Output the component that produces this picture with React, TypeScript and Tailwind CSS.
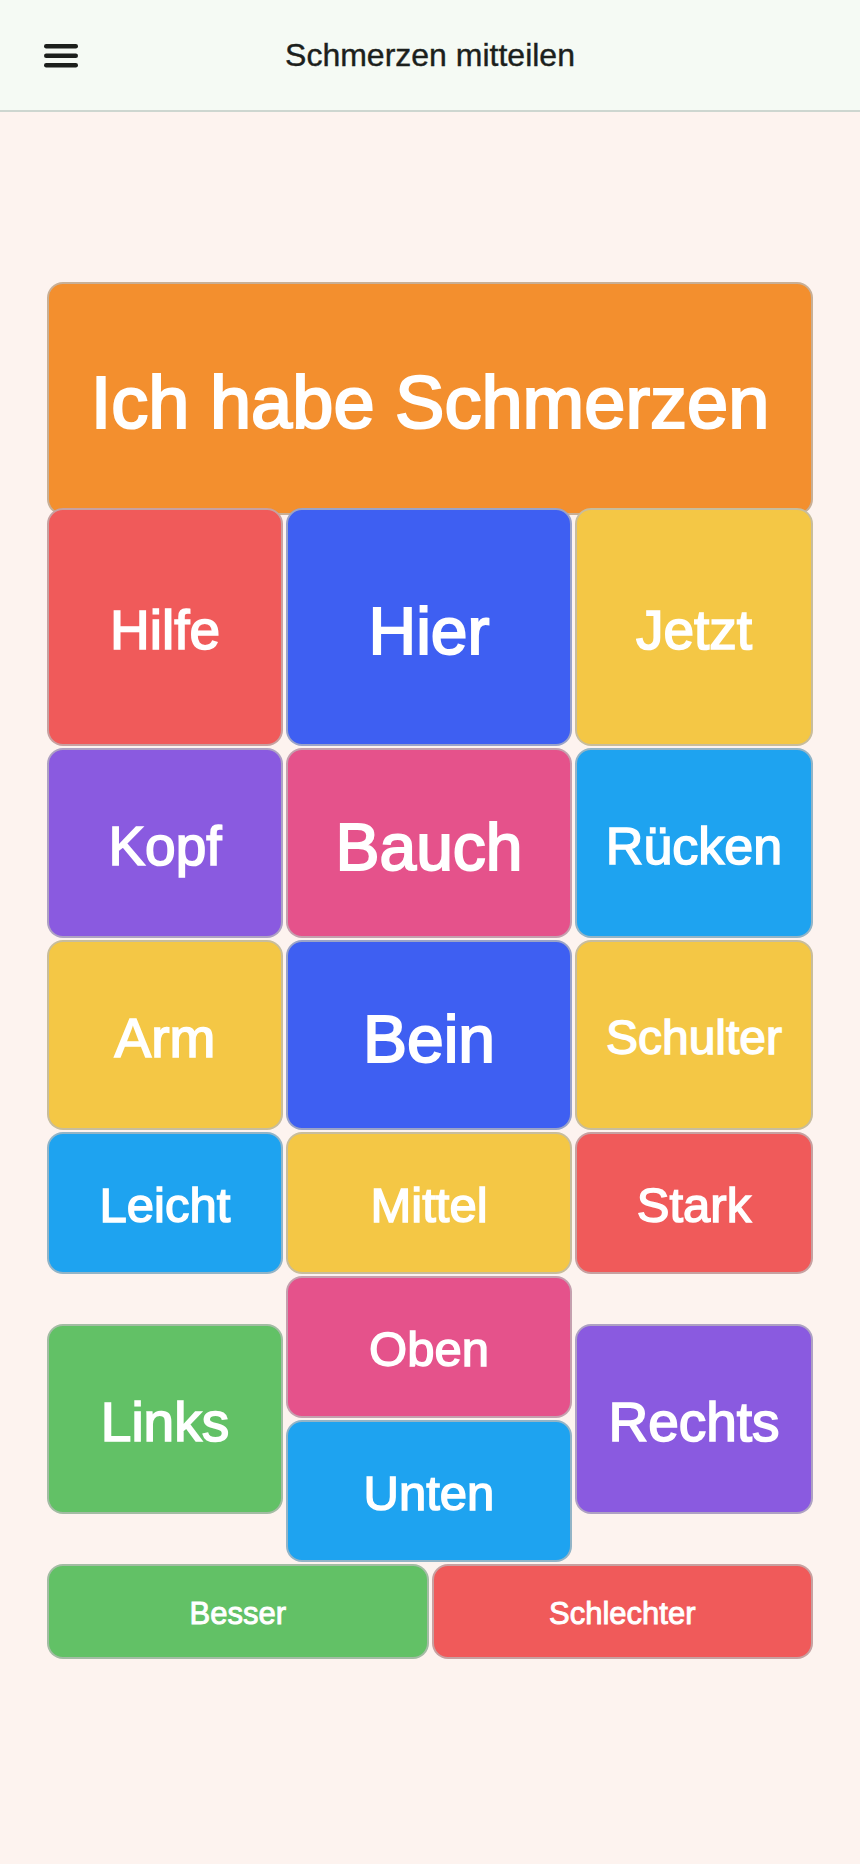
import React from 'react';

type Tile = {
    label: string;
    color: string;
    size: string;
    extra?: string;
};

const tiles: Tile[] = [
    { label: 'Hilfe', color: 'bg-[#f05a5a]', size: 'text-[55px]' },
    { label: 'Hier', color: 'bg-[#3e5ff2]', size: 'text-[66px]' },
    { label: 'Jetzt', color: 'bg-[#f4c745]', size: 'text-[55px]' },
    { label: 'Kopf', color: 'bg-[#8a5ae0]', size: 'text-[55px]' },
    { label: 'Bauch', color: 'bg-[#e5528b]', size: 'text-[66px]' },
    { label: 'Rücken', color: 'bg-[#1ea3f0]', size: 'text-[52px]' },
    { label: 'Arm', color: 'bg-[#f4c745]', size: 'text-[55px]' },
    { label: 'Bein', color: 'bg-[#3e5ff2]', size: 'text-[66px]' },
    { label: 'Schulter', color: 'bg-[#f4c745]', size: 'text-[48px]' },
    { label: 'Leicht', color: 'bg-[#1ea3f0]', size: 'text-[49px]' },
    { label: 'Mittel', color: 'bg-[#f4c745]', size: 'text-[49px]' },
    { label: 'Stark', color: 'bg-[#f05a5a]', size: 'text-[49px]' },
    { label: 'Links', color: 'bg-[#62c166]', size: 'text-[55px]', extra: 'row-span-2 self-center h-[190px]' },
    { label: 'Oben', color: 'bg-[#e5528b]', size: 'text-[49px]' },
    { label: 'Rechts', color: 'bg-[#8a5ae0]', size: 'text-[55px]', extra: 'row-span-2 self-center h-[190px]' },
    { label: 'Unten', color: 'bg-[#1ea3f0]', size: 'text-[49px]', extra: 'col-start-2' },
];

// the labels in the app are a touch heavier than plain Arial, hence the thin stroke
const tileBase =
    'flex items-center justify-center pt-[0.12em] rounded-[16px] border-2 border-[rgba(185,185,185,0.75)] text-white leading-none [-webkit-text-stroke:0.03em_white]';

const MenuIcon = () => (
    <svg width="34" height="24" viewBox="0 0 34 24" fill="#1c1f1c">
        <rect x="0" y="0" width="34" height="4.5" rx="2.2" />
        <rect x="0" y="9.5" width="34" height="4.5" rx="2.2" />
        <rect x="0" y="19" width="34" height="4.5" rx="2.2" />
    </svg>
);

const App: React.FC = () => {
    return (
        <div className="min-h-[1864px] bg-[#fdf3ef] font-['Liberation_Sans',Arial,sans-serif]">
            <header className="relative flex h-[112px] items-center justify-center border-b-2 border-[#cdd6d0] bg-[#f5faf4]">
                <button className="absolute left-[44px] top-[44px]">
                    <MenuIcon />
                </button>
                <h1 className="text-[32px] text-[#1c1f1c] [-webkit-text-stroke:0.4px_#1c1f1c]">Schmerzen mitteilen</h1>
            </header>

            <main className="flex flex-col px-[47px] pt-[170px]">
                <button className={`${tileBase} h-[233px] bg-[#f38f2e] text-[74px]`}>
                    Ich habe Schmerzen
                </button>

                <div className="-mt-[7px] grid grid-cols-[236px_286px_1fr] grid-rows-[238px_190px_190px_142px_142px_142px] gap-x-[3px] gap-y-[2px]">
                    {tiles.map((t) => (
                        <button key={t.label} className={`${tileBase} ${t.color} ${t.size} ${t.extra ?? ''}`}>
                            {t.label}
                        </button>
                    ))}
                </div>

                <div className="mt-[2px] grid h-[95px] grid-cols-2 gap-[3px]">
                    <button className={`${tileBase} bg-[#62c166] text-[31px]`}>Besser</button>
                    <button className={`${tileBase} bg-[#f05a5a] text-[31px]`}>Schlechter</button>
                </div>
            </main>
        </div>
    );
};

export default App;
